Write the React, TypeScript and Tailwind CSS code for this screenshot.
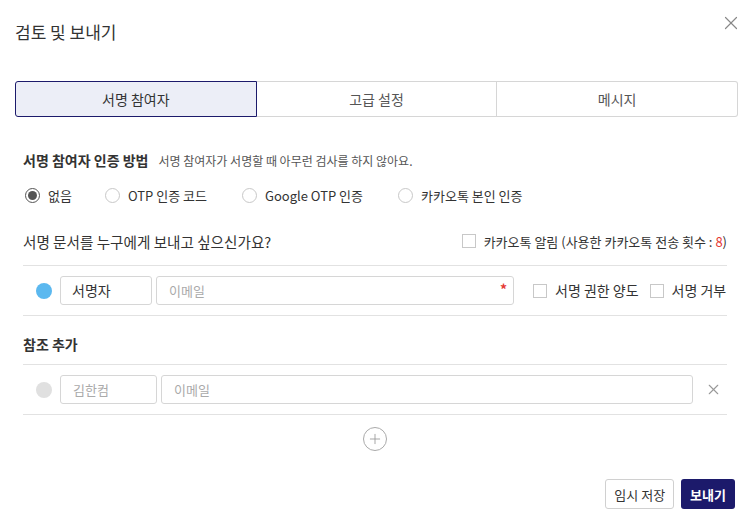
import { X, Plus } from "lucide-react";

const font = { fontFamily: '"Noto Sans CJK KR", "Noto Sans", sans-serif' };

function Radio({ checked, label }: { checked?: boolean; label: string }) {
  return (
    <label className="flex items-center gap-[8px]">
      <span
        className={`flex h-[15px] w-[15px] items-center justify-center rounded-full border ${
          checked ? "border-[#555]" : "border-[#c8c8c8]"
        }`}
      >
        {checked && <span className="h-[9px] w-[9px] rounded-full bg-[#555]" />}
      </span>
      <span className="text-[13px] text-[#333]">{label}</span>
    </label>
  );
}

function Check({ children, size = "text-[13px]" }: { children: React.ReactNode; size?: string }) {
  return (
    <label className="flex items-center gap-[8px]">
      <span className="h-[14px] w-[14px] border border-[#c8c8c8] bg-white" />
      <span className={`${size} text-[#333]`}>{children}</span>
    </label>
  );
}

export default function App() {
  return (
    <div style={font} className="h-[522px] w-[753px] bg-white px-[15px] text-[#333]">
      {/* 헤더 */}
      <div className="flex h-[64px] items-center justify-between">
        <h1 className="text-[17px] font-normal text-[#333]">검토 및 보내기</h1>
        <X className="-mt-[19px] -mr-[4px] h-[22px] w-[22px] text-[#888]" strokeWidth={1.3} />
      </div>

      {/* 탭 */}
      <div className="mt-[17px] flex h-[36px]">
        <div className="flex flex-1 items-center justify-center rounded-l-[3px] border border-[#1c1a6b] bg-[#eceef7] text-[14px] text-[#333]">
          서명 참여자
        </div>
        <div className="flex flex-1 items-center justify-center border-y border-r border-[#d6d6d6] text-[14px] text-[#555]">
          고급 설정
        </div>
        <div className="flex flex-1 items-center justify-center rounded-r-[3px] border-y border-r border-[#d6d6d6] text-[14px] text-[#555]">
          메시지
        </div>
      </div>

      <div className="pl-[8px] pr-[11px]">
        {/* 인증 방법 */}
        <div className="mt-[33px] flex items-baseline gap-[10px]">
          <span className="text-[14px] font-bold text-[#333]">서명 참여자 인증 방법</span>
          <span className="text-[12px] text-[#555]">서명 참여자가 서명할 때 아무런 검사를 하지 않아요.</span>
        </div>
        <div className="mt-[15px] flex items-center pl-[2px]">
          <div className="w-[80px]">
            <Radio checked label="없음" />
          </div>
          <div className="w-[137px]">
            <Radio label="OTP 인증 코드" />
          </div>
          <div className="w-[156px]">
            <Radio label="Google OTP 인증" />
          </div>
          <Radio label="카카오톡 본인 인증" />
        </div>

        {/* 서명 참여자 */}
        <div className="mt-[25px] flex items-center justify-between">
          <span className="text-[14.6px] text-[#333]">서명 문서를 누구에게 보내고 싶으신가요?</span>
          <Check>
            카카오톡 알림 (사용한 카카오톡 전송 횟수 : <span className="text-[#e53935]">8</span>)
          </Check>
        </div>

        <div className="mt-[13px] flex h-[51px] items-center border-y border-[#e2e2e2]">
          <span className="ml-[13px] h-[16px] w-[16px] rounded-full bg-[#5bb8ef]" />
          <div className="ml-[8px] flex h-[29px] w-[92px] items-center rounded-[3px] border border-[#d6d6d6] px-[11px] text-[14px] text-[#333]">
            서명자
          </div>
          <div className="relative ml-[4px] flex h-[29px] w-[358px] items-center rounded-[3px] border border-[#d6d6d6] px-[12px] text-[13px] text-[#aaa]">
            이메일
            <span className="absolute right-[6px] top-[2px] text-[14px] font-bold text-[#e53935]">*</span>
          </div>
          <div className="ml-[19px] flex items-center gap-[11px]">
            <Check size="text-[14px]">서명 권한 양도</Check>
            <Check size="text-[14px]">서명 거부</Check>
          </div>
        </div>

        {/* 참조 */}
        <div className="flex h-[48px] items-end pb-[9px]">
          <span className="text-[14px] font-bold text-[#333]">참조 추가</span>
        </div>
        <div className="flex h-[51px] items-center border-y border-[#e2e2e2]">
          <span className="ml-[13px] h-[16px] w-[16px] rounded-full bg-[#e0e0e0]" />
          <div className="ml-[8px] flex h-[29px] w-[97px] items-center rounded-[3px] border border-[#d6d6d6] px-[12px] text-[13px] text-[#aaa]">
            김한컴
          </div>
          <div className="ml-[4px] flex h-[29px] w-[532px] items-center rounded-[3px] border border-[#d6d6d6] px-[12px] text-[13px] text-[#aaa]">
            이메일
          </div>
          <X className="ml-[12px] h-[17px] w-[17px] text-[#999]" strokeWidth={1.5} />
        </div>

        <div className="mt-[12px] flex justify-center">
          <span className="flex h-[24px] w-[24px] items-center justify-center rounded-full border border-[#aaa]">
            <Plus className="h-[16px] w-[16px] text-[#999]" strokeWidth={1.3} />
          </span>
        </div>
      </div>

      {/* 버튼 */}
      <div className="mt-[28px] flex justify-end gap-[7px] pr-[3px]">
        <button className="h-[30px] rounded-[3px] border border-[#d0d0d0] bg-white px-[8px] text-[13px] text-[#333]">
          임시 저장
        </button>
        <button className="h-[30px] rounded-[3px] bg-[#1c1a6b] px-[9px] text-[13px] font-bold text-white">
          보내기
        </button>
      </div>
    </div>
  );
}
